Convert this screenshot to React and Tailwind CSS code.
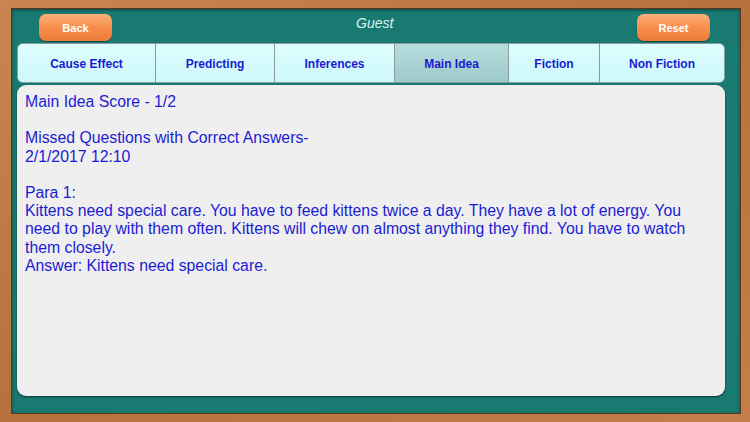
import React from "react";

const tabs = [
  { label: "Cause Effect", w: "w-[137px]" },
  { label: "Predicting", w: "w-[119px]" },
  { label: "Inferences", w: "w-[120px]" },
  { label: "Main Idea", w: "w-[114px]", active: true },
  { label: "Fiction", w: "w-[91px]" },
  { label: "Non Fiction", w: "flex-1" },
];

function OrangeButton({ children }) {
  return (
    <button className="w-[73px] h-[27px] rounded-[7px] bg-gradient-to-b from-[#fbb07a] via-[#f78e4c] to-[#ef7a36] shadow-[0_1px_1px_rgba(0,0,0,0.35)] text-white font-bold text-[11px] flex items-center justify-center pt-[3px]">
      {children}
    </button>
  );
}

export default function App() {
  return (
    <div
      className="w-[750px] h-[422px] bg-gradient-to-br from-[#c98550] via-[#b8703d] to-[#c47e4b] pl-[11px] pt-[8px] pr-[9px] pb-[8px]"
      style={{ fontFamily: '"Liberation Sans", Arial, sans-serif' }}
    >
      <div className="w-full h-full bg-[#187a71] border border-[#5a3a20] shadow-[inset_0_1px_3px_rgba(0,0,0,0.5)] flex flex-col pl-[5px] pr-[15px]">
        <div className="h-[34px] flex items-center relative">
          <div className="ml-[22px] mt-[2px]">
            <OrangeButton>Back</OrangeButton>
          </div>
          <div className="absolute left-[339px] top-[4px] text-[14px] italic text-[#dfeeed]">Guest</div>
          <div className="ml-auto mr-[15px] mt-[2px]">
            <OrangeButton>Reset</OrangeButton>
          </div>
        </div>
        <div className="h-[40px] flex rounded-md overflow-hidden border border-[#8a9c9c] bg-[#d6fbfd]">
          {tabs.map((t, i) => (
            <div
              key={t.label}
              className={`${t.w} h-full flex items-center justify-center pt-[1px] text-[12px] font-bold text-[#1a1ad2] ${
                i > 0 ? "border-l border-[#8a9c9c]" : ""
              } ${
                t.active
                  ? "bg-gradient-to-b from-[#b6dcdc] to-[#9ecaca]"
                  : "bg-gradient-to-b from-[#ddfdfe] to-[#cdf8fa]"
              }`}
            >
              {t.label}
            </div>
          ))}
        </div>
        <div className="mt-[2px] h-[311px] rounded-[9px] bg-[#efefef] shadow-[0_1px_2px_rgba(0,0,0,0.6)] px-[8px] pt-[8px] text-[15.8px] leading-[18.2px] text-[#1c1cd4]">
          <div>Main Idea Score - 1/2</div>
          <div>&nbsp;</div>
          <div>Missed Questions with Correct Answers-</div>
          <div>2/1/2017 12:10</div>
          <div>&nbsp;</div>
          <div>Para 1:</div>
          <div className="pr-[20px]">
            Kittens need special care. You have to feed kittens twice a day. They have a lot of energy. You need to play with them often. Kittens will chew on almost anything they find. You have to watch them closely.
          </div>
          <div>Answer: Kittens need special care.</div>
        </div>
      </div>
    </div>
  );
}
